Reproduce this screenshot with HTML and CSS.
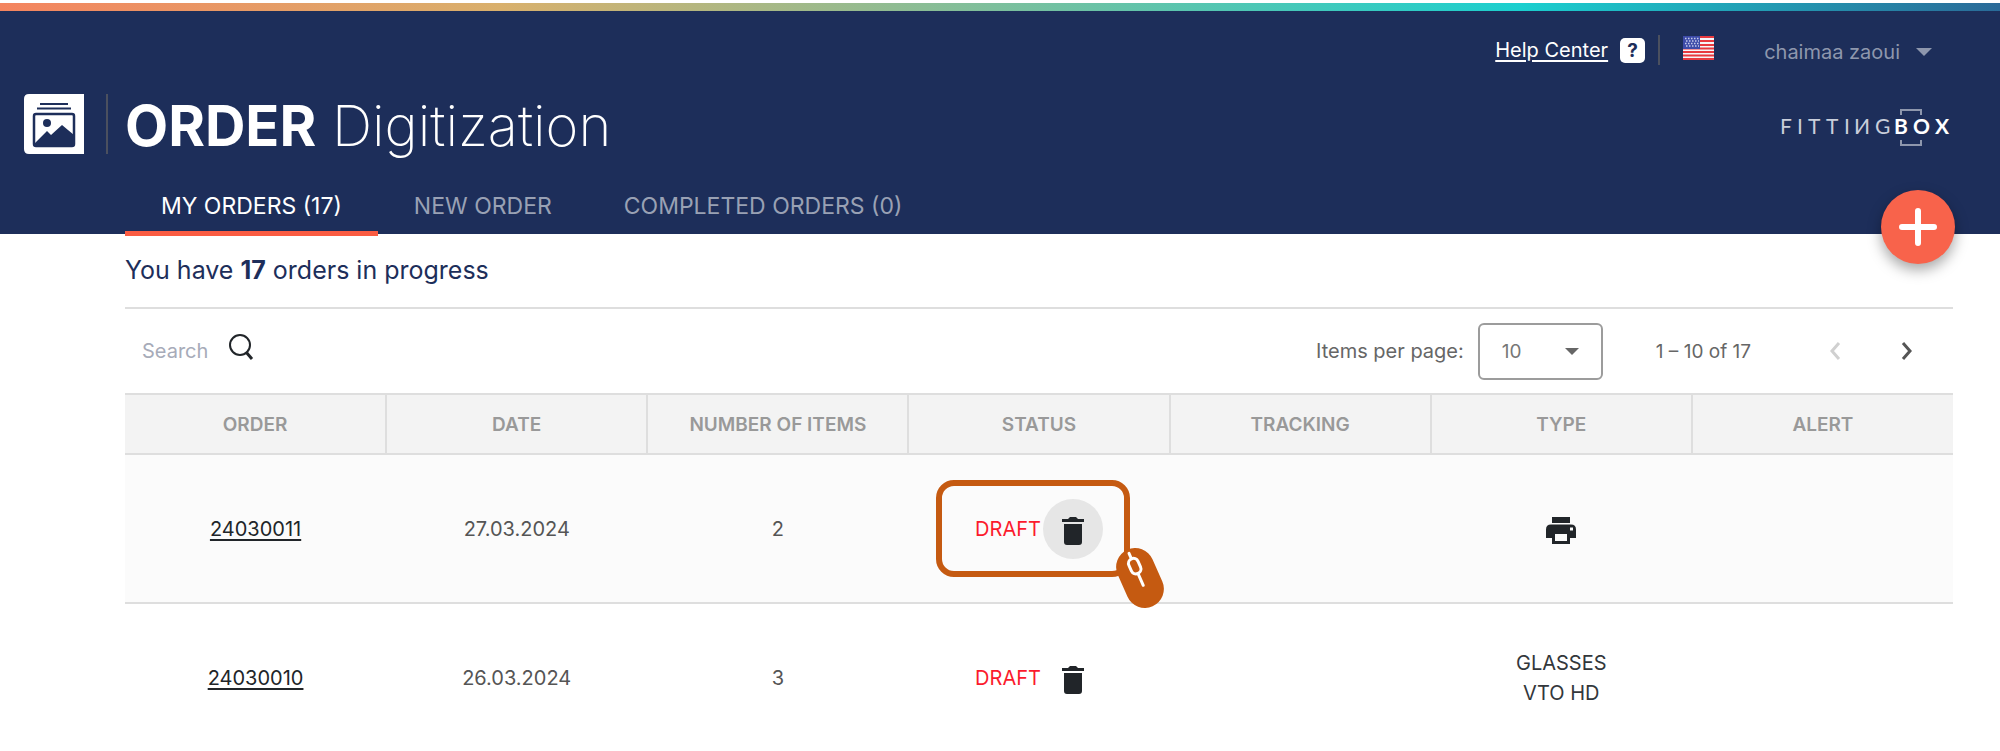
FILE: index.html
```html
<!doctype html>
<html lang="en">

<head>
  <meta charset="utf-8">
  <meta name="viewport" content="width=device-width, initial-scale=1">
  <title>Order Digitization</title>
  <link rel="stylesheet" href="styles.css">
</head>

<body>
  <div class="rainbow"></div>
  <header class="header">
    <div class="topbar">
      <a class="help" href="#help">Help Center</a>
      <span class="help-badge">?</span>
      <span class="topbar-divider"></span>
      <button class="flag" aria-label="Language">
        <svg width="31" height="24" viewBox="0 0 31 24">
          <rect width="31" height="24" fill="#f5f5f8"/>
          <path d="M0 1h31M0 5h31M0 9h31M0 12.500h31M0 16h31M0 19.500h31M0 23h31" stroke="#e8393f" stroke-width="2"/>
          <rect width="17" height="13" fill="#3d4ba8"/>
          <path d="M2 2.500h14M3 5h13M2 7.500h14M3 10h13" stroke="#c4cbea" stroke-width="1.300" stroke-dasharray="1.500 1.500"/>
        </svg>
      </button>
      <button class="user">chaimaa zaoui
        <svg width="16" height="8" viewBox="0 0 16 8"><path d="M0 0h16L8 8z" fill="currentColor"/></svg>
      </button>
    </div>

    <div class="brand">
      <svg class="app-icon" width="60" height="60" viewBox="0 0 60 60">
        <path d="M5 0H60V60H5Q0 60 0 55V5Q0 0 5 0Z" fill="#fff"/>
        <path d="M16 10h28M13 14.500h34" stroke="#1d2e5a" stroke-width="2"/>
        <rect x="10" y="20" width="40" height="32" rx="2" fill="#fff" stroke="#1d2e5a" stroke-width="2.500"/>
        <circle cx="23" cy="29" r="4" fill="#1d2e5a"/>
        <path d="M10 50l13-13 4 4 11-10 12 10v10H10z" fill="#1d2e5a"/>
      </svg>
      <span class="brand-divider"></span>
      <h1 class="title"><strong>ORDER</strong> Digitization</h1>
      <svg class="logo" width="172" height="40" viewBox="0 0 172 40" role="img" aria-label="Fittingbox">
        <text class="logo-light" y="27" x="0 17 28 46 64 74 95">FITTIИG</text>
        <text class="logo-bold" y="27" x="114 133 155">BOX</text>
        <path d="M121 8V3h20v5M121 33v5h20v-5" fill="none" stroke="#8e97ad" stroke-width="2"/>
      </svg>
    </div>

    <nav class="tabs">
      <a class="tab tab-active" href="#orders">MY ORDERS (17)</a>
      <a class="tab" href="#new">NEW ORDER</a>
      <a class="tab" href="#completed">COMPLETED ORDERS (0)</a>
    </nav>

    <button class="add" aria-label="New order">
      <svg width="38" height="38" viewBox="0 0 38 38"><path d="M19 3v32M3 19h32" stroke="#fff" stroke-width="6" stroke-linecap="round"/></svg>
    </button>
  </header>

  <main class="content">
    <p class="summary">You have <strong>17</strong> orders in progress</p>

    <div class="toolbar">
      <input class="search" id="search" type="text" placeholder="Search" aria-label="Search">
      <button class="search-btn" aria-label="Run search">
        <svg width="26" height="28" viewBox="0 0 26 28"><g fill="none" stroke="#212529"><circle cx="12" cy="12" r="10" stroke-width="2"/><path d="M18 19l6 7" stroke-width="3"/></g></svg>
      </button>

      <div class="paginator">
        <label for="page-size">Items per page:</label>
        <span class="select">
          <select id="page-size">
            <option>10</option>
            <option>25</option>
            <option>50</option>
          </select>
          <svg class="select-arrow" width="14" height="7" viewBox="0 0 14 7"><path d="M0 0h14L7 7z" fill="#666"/></svg>
        </span>
        <span class="range">1 – 10 of 17</span>
        <button class="page-btn" aria-label="Previous page" disabled>
          <svg width="12" height="18" viewBox="0 0 12 18"><path d="M10 1L3 9l7 8" fill="none" stroke="#d0d0d0" stroke-width="3"/></svg>
        </button>
        <button class="page-btn" aria-label="Next page">
          <svg width="12" height="18" viewBox="0 0 12 18"><path d="M2 1l7 8-7 8" fill="none" stroke="#555" stroke-width="3"/></svg>
        </button>
      </div>
    </div>

    <table class="orders">
      <thead>
        <tr>
          <th>ORDER</th>
          <th>DATE</th>
          <th>NUMBER OF ITEMS</th>
          <th>STATUS</th>
          <th>TRACKING</th>
          <th>TYPE</th>
          <th>ALERT</th>
        </tr>
      </thead>
      <tbody>
        <tr>
          <td><a href="#24030011">24030011</a></td>
          <td>27.03.2024</td>
          <td>2</td>
          <td class="status-cell">
            <div class="status">
              DRAFT
              <button class="trash trash-hover" aria-label="Delete order 24030011">
                <svg width="22" height="28" viewBox="0 0 22 28"><path d="M0 2h6l2-2h6l2 2h6v3H0zM2 7h18v18q0 3-3 3H5q-3 0-3-3z" fill="#212529"/></svg>
              </button>
            </div>
            <div class="highlight">
              <svg class="mouse" width="50" height="64" viewBox="0 0 50 64">
                <g transform="rotate(-24 25 32)">
                  <rect x="6" y="1" width="38" height="62" rx="19" fill="#c55a11"/>
                  <path d="M25 5v6M25 27v13" stroke="#fff" stroke-width="3" stroke-linecap="round"/>
                  <rect x="20" y="11" width="10" height="16" rx="5" fill="#c55a11" stroke="#fff" stroke-width="3"/>
                </g>
              </svg>
            </div>
          </td>
          <td></td>
          <td>
            <svg class="printer" width="30" height="27" viewBox="0 0 30 27">
              <path d="M6 0h18v6H6z" fill="#212529"/>
              <path fill-rule="evenodd" d="M5 7.500h20q5 0 5 5V21h-6v6H6v-6H0v-8.500q0-5 5-5zM9 17v7h12v-7zM24 10.500v3h3v-3z" fill="#212529"/>
            </svg>
          </td>
          <td></td>
        </tr>
        <tr>
          <td><a href="#24030010">24030010</a></td>
          <td>26.03.2024</td>
          <td>3</td>
          <td>
            <div class="status">
              DRAFT
              <button class="trash" aria-label="Delete order 24030010">
                <svg width="22" height="28" viewBox="0 0 22 28"><path d="M0 2h6l2-2h6l2 2h6v3H0zM2 7h18v18q0 3-3 3H5q-3 0-3-3z" fill="#212529"/></svg>
              </button>
            </div>
          </td>
          <td></td>
          <td class="type">GLASSES<br>VTO HD</td>
          <td></td>
        </tr>
      </tbody>
    </table>
  </main>
</body>
</html>
```
FILE: styles.css
```css
* {
  box-sizing: border-box;
}
body {
  margin: 0;
  background: #fff;
  color: #212529;
  font-family: Inter, "Open Sans", sans-serif;
  font-size: 20px;
}
button {
  padding: 0;
  border: 0;
  background: none;
  color: inherit;
  font: inherit;
  cursor: pointer;
}
svg {
  display: block;
}

/* header */
.rainbow {
  height: 8px;
  margin-top: 3px;
  background: linear-gradient(90deg, #f4845f 0%, #d9b06c 25%, #1bcfcf 76%, #2a6a98 100%);
}
.header {
  display: flow-root;
  position: relative;
  background: #1d2e5a;
}
.topbar {
  display: flex;
  align-items: center;
  justify-content: flex-end;
  height: 78px;
  padding-right: 68px;
}
.help {
  color: #fff;
  text-underline-offset: 3px;
}
.help-badge {
  width: 25px;
  margin-left: 12px;
  border-radius: 5px;
  background: #fff;
  color: #1d2e5a;
  font-size: 19px;
  font-weight: bold;
  line-height: 25px;
  text-align: center;
}
.topbar-divider {
  width: 2px;
  height: 30px;
  margin: 0 23px 0 13px;
  background: #4b505f;
}
.flag {
  padding-bottom: 4px;
}
.user {
  display: flex;
  align-items: center;
  gap: 16px;
  margin-left: 50px;
  padding-top: 4px;
  color: #8e97ad;
}
.brand {
  display: flex;
  align-items: center;
  height: 70px;
  padding: 0 48px 0 24px;
}
.brand-divider {
  width: 2px;
  height: 60px;
  margin: 0 17px 0 22px;
  background: #4b505f;
}
.title {
  margin: 0;
  padding-top: 4px;
  color: #fff;
  font-size: 56px;
  font-weight: 200;
}
.title strong {
  font-weight: 700;
}
.logo {
  margin-top: 6px;
  margin-left: auto;
  font-family: Lato, sans-serif;
  font-size: 21px;
}
.logo-light {
  fill: #c9cedb;
}
.logo-bold {
  fill: #fff;
  font-weight: bold;
}
.tabs {
  display: flex;
  height: 77px;
  margin-bottom: -2px;
  padding-left: 125px;
}
.tab {
  padding: 33px 36px 0;
  color: #99a1b4;
  font-size: 23px;
  line-height: 28px;
  text-decoration: none;
}
.tab-active {
  border-bottom: 5px solid #fb5c42;
  color: #fff;
}
.add {
  display: grid;
  place-items: center;
  position: absolute;
  right: 45px;
  bottom: -30px;
  width: 74px;
  height: 74px;
  border-radius: 50%;
  background: #f8634b;
  box-shadow: 0 6px 14px rgba(0, 0, 0, 0.35);
}

/* content */
.content {
  padding: 0 47px 0 125px;
}
.summary {
  margin: 0;
  padding: 20px 0;
  border-bottom: 2px solid #dedede;
  color: #1d2e5a;
  font-size: 25px;
  line-height: 33px;
}
.toolbar {
  display: flex;
  align-items: center;
  height: 84px;
  padding-left: 17px;
}
.search {
  width: 86px;
  padding: 0;
  border: 0;
  outline: 0;
  background: none;
  font: inherit;
}
.search::placeholder {
  color: #a7abb9;
}
.search-btn {
  padding-bottom: 8px;
}
.paginator {
  display: flex;
  align-items: center;
  margin-left: auto;
  color: #666;
}
.select {
  display: flex;
  align-items: center;
  position: relative;
  margin: 0 53px 0 14px;
}
.select select {
  width: 125px;
  height: 57px;
  padding: 0 22px;
  border: 2px solid #9c9c9c;
  border-radius: 6px;
  background: #fff;
  color: #777;
  font: inherit;
  font-size: 19px;
  appearance: none;
}
.select-arrow {
  position: absolute;
  right: 24px;
  pointer-events: none;
}
.range {
  margin-right: 48px;
  font-size: 19px;
}
.page-btn {
  display: grid;
  place-items: center;
  width: 72px;
  height: 48px;
}
.page-btn:last-child {
  margin-right: 10px;
}

.orders {
  width: 100%;
  table-layout: fixed;
  border-collapse: collapse;
  text-align: center;
}
.orders th {
  height: 60px;
  padding: 0;
  border: solid #dedede;
  border-width: 2px 0 2px 2px;
  background: #f3f3f3;
  color: #999;
  font-size: 19px;
  font-weight: 600;
}
.orders th:first-child {
  border-left: 0;
}
.orders td {
  height: 149px;
  padding: 0;
  color: #555;
}
.orders tbody tr:first-child {
  border-bottom: 2px solid #dedede;
  background: #fbfbfb;
}
.orders a {
  color: #212529;
  text-underline-offset: 3px;
}
.orders .type {
  color: #33373b;
  line-height: 30px;
}
.status-cell {
  position: relative;
}
.status {
  display: flex;
  align-items: center;
  justify-content: center;
  gap: 2px;
  color: #fb1a2d;
}
.trash {
  display: grid;
  place-items: center;
  width: 60px;
  height: 60px;
  padding-top: 4px;
  border-radius: 50%;
}
.trash-hover {
  background: #e6e6e6;
}
.printer {
  margin: 4px auto 0;
}

/* click hint drawn over the first status */
.highlight {
  position: absolute;
  top: 25px;
  left: 28px;
  width: 194px;
  height: 97px;
  border: 6px solid #c55a11;
  border-radius: 18px;
  pointer-events: none;
}
.mouse {
  position: absolute;
  right: -41px;
  bottom: -39px;
}
```
